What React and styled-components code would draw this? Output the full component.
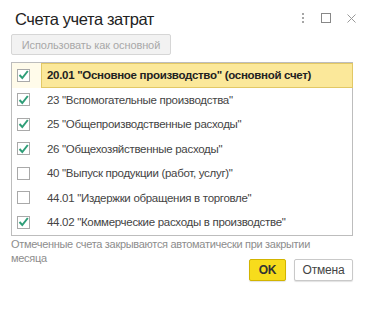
import styled, { createGlobalStyle } from "styled-components"

const Global = createGlobalStyle`
    html, body { margin:0; padding:0; background:#fff; }
    body { font-family:"Liberation Sans", Arial, sans-serif; }
`
const Window = styled.div`
    width:371px;
    height:320px;
    box-sizing:border-box;
    padding:0 18px 0 11px;
    background:#fff;
    color:#333;
`
const Header = styled.header`
    display:flex;
    align-items:center;
    justify-content:space-between;
    height:34px;
    padding-left:4px;
`
const Title = styled.h1`
    margin:4px 0 0;
    font-size:16.5px;
    letter-spacing:-0.4px;
    font-weight:400;
    color:#222;
`
const Icons = styled.div`
    display:flex;
    align-items:center;
    gap:16px;
    margin:2px -3px 0 0;
    color:#8c8c8c;
`
const Toolbar = styled.div`
    display:flex;
`
const GhostButton = styled.button`
    height:21px;
    width:160px;
    padding:0;
    border:1px solid #d6d6d6;
    border-radius:2px;
    background:#f2f2f2;
    color:#a8a8a8;
    font-family:inherit;
    font-size:11px;
    letter-spacing:-0.1px;
`
const List = styled.div`
    margin-top:7px;
    border:1px solid #bdbdbd;
`
const Row = styled.div`
    display:flex;
    height:24.5px;
    align-items:stretch;
`
const BoxCell = styled.div`
    width:24px;
    display:flex;
    align-items:center;
    padding-left:5px;
    background:${({active}) => active ? "#fffbea" : "transparent"};
`
const Box = styled.span`
    width:13px;
    height:13px;
    box-sizing:border-box;
    border:1px solid #a9a9a9;
    background:#fff;
    display:flex;
    align-items:center;
    justify-content:center;
`
const Label = styled.div`
    flex:1;
    display:flex;
    align-items:center;
    padding-left:5px;
    font-size:11.5px;
    letter-spacing:-0.3px;
    color:${({active}) => active ? "#222" : "#444"};
    font-weight:${({active}) => active ? 700 : 400};
    background:${({active}) => active ? "#fbe89a" : "transparent"};
    border:${({active}) => active ? "1px solid #e2c865" : "1px solid transparent"};
    margin:${({active}) => active ? "0 -1px 0 0" : "0"};
`
const Note = styled.p`
    margin:1px 0 0;
    max-width:318px;
    font-size:11px;
    letter-spacing:-0.3px;
    line-height:14px;
    color:#8d8d8d;
`
const Footer = styled.div`
    display:flex;
    justify-content:flex-end;
    gap:8px;
    margin-top:-6px;
`
const Button = styled.button`
    height:22px;
    padding:0;
    width:${({primary}) => primary ? "37px" : "59px"};
    border:1px solid ${({primary}) => primary ? "#d2b400" : "#c9c9c9"};
    border-radius:2px;
    background:${({primary}) => primary ? "#f7dc1c" : "#fff"};
    box-shadow:0 1px 1px rgba(0,0,0,0.12);
    color:${({primary}) => primary ? "#333" : "#444"};
    font-family:inherit;
    font-size:12px;
    letter-spacing:-0.2px;
    font-weight:${({primary}) => primary ? 700 : 400};
`

const rows = [
    {text:'20.01 "Основное производство" (основной счет)', on:true, active:true},
    {text:'23 "Вспомогательные производства"', on:true},
    {text:'25 "Общепроизводственные расходы"', on:true},
    {text:'26 "Общехозяйственные расходы"', on:true},
    {text:'40 "Выпуск продукции (работ, услуг)"', on:false},
    {text:'44.01 "Издержки обращения в торговле"', on:false},
    {text:'44.02 "Коммерческие расходы в производстве"', on:true},
]

const Check = () => (
    <svg width="11" height="10" viewBox="0 0 11 10">
        <path d="M1.5 5 L4.3 8 L9.8 1" fill="none" stroke="#2f9e78" strokeWidth="2" />
    </svg>
)

const App = () => {
  return (
    <Window>
        <Global />
        <Header>
            <Title>Счета учета затрат</Title>
            <Icons>
                <svg width="4" height="12" viewBox="0 0 4 12">
                    <circle cx="2" cy="2" r="1" fill="#888" />
                    <circle cx="2" cy="6" r="1" fill="#888" />
                    <circle cx="2" cy="10" r="1" fill="#888" />
                </svg>
                <svg width="10" height="10" viewBox="0 0 10 10">
                    <rect x="0.5" y="0.5" width="9" height="9" fill="none" stroke="#888" />
                </svg>
                <svg width="9" height="9" viewBox="0 0 9 9">
                    <path d="M0.5 0.5 L8.5 8.5 M8.5 0.5 L0.5 8.5" stroke="#999" strokeWidth="1" />
                </svg>
            </Icons>
        </Header>
        <Toolbar>
            <GhostButton disabled>Использовать как основной</GhostButton>
        </Toolbar>
        <List>
            {rows.map((r, i) => (
                <Row key={i}>
                    <BoxCell active={r.active}>
                        <Box>{r.on && <Check />}</Box>
                    </BoxCell>
                    <Label active={r.active}>{r.text}</Label>
                </Row>
            ))}
        </List>
        <Note>Отмеченные счета закрываются автоматически при закрытии месяца</Note>
        <Footer>
            <Button primary>OK</Button>
            <Button>Отмена</Button>
        </Footer>
    </Window>
  )
}

export default App
